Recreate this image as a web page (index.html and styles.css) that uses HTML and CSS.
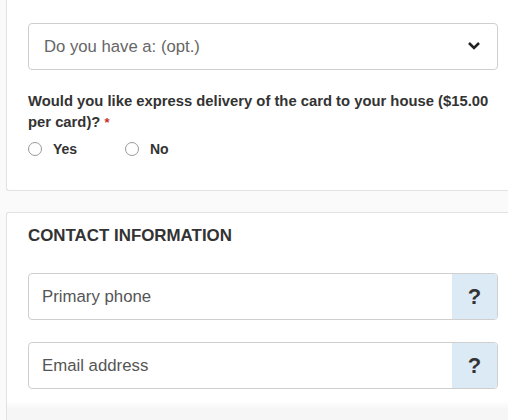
FILE: index.html
```html
<!DOCTYPE html>
<html>
<head>
<meta charset="utf-8">
<link rel="stylesheet" href="styles.css">
</head>
<body>
<div class="card card-top">
  <div class="select">
    <span class="select-text">Do you have a: (opt.)</span>
    <svg class="chevron" width="14" height="9" viewBox="0 0 14 9"><path d="M2 2 L7 7 L12 2" fill="none" stroke="#222" stroke-width="2.6"/></svg>
  </div>
  <p class="question">Would you like express delivery of the card to your house ($15.00 per card)? <span class="req">*</span></p>
  <div class="radios">
    <label class="radio"><span class="circle"></span>Yes</label>
    <label class="radio"><span class="circle"></span>No</label>
  </div>
</div>
<div class="card card-bottom">
  <h2 class="heading">CONTACT INFORMATION</h2>
  <div class="input">
    <span class="input-text">Primary phone</span>
    <span class="addon">?</span>
  </div>
  <div class="input">
    <span class="input-text">Email address</span>
    <span class="addon">?</span>
  </div>
</div>
</body>
</html>
```
FILE: styles.css
```css
html, body { margin: 0; padding: 0; }
body {
  width: 508px;
  height: 420px;
  overflow: hidden;
  background: #fafafa;
  font-family: "Liberation Sans", Arial, sans-serif;
  color: #333;
}
.card {
  background: #fff;
  margin-left: 6px;
  border: 1px solid #e2e2e2;
  border-right: none;
  box-sizing: border-box;
}
.card-top {
  border-top: none;
  height: 191px;
  padding: 23px 10px 0 21px;
  border-radius: 0 0 0 3px;
}
.select {
  display: flex;
  align-items: center;
  justify-content: space-between;
  height: 47px;
  box-sizing: border-box;
  border: 1px solid #cfcfcf;
  border-radius: 4px;
  padding: 0 16px 0 15px;
  background: #fff;
}
.select-text { font-size: 16.7px; color: #666; }
.chevron { display: block; margin-top: -2px; }
.question {
  margin: 21px 0 0 0;
  font-size: 14.8px;
  font-weight: bold;
  line-height: 21px;
  color: #333;
}
.req { color: #c9302c; font-size: 13px; line-height: 1; }
.radios {
  display: flex;
  margin-top: 8px;
}
.radio {
  display: flex;
  align-items: center;
  font-size: 14px;
  font-weight: bold;
  color: #333;
  width: 97px;
}
.circle {
  width: 12px;
  height: 12px;
  border: 1px solid #9a9a9a;
  border-radius: 50%;
  margin-right: 11px;
  background: #fff;
}
.card-bottom {
  margin-top: 21px;
  height: 208px;
  padding: 13px 10px 0 21px;
  border-bottom: none;
  border-radius: 3px 0 0 0;
  background: linear-gradient(#fff 0, #fff 188px, #f6f6f6 196px);
}
.heading {
  margin: 0;
  font-size: 16.9px;
  line-height: 20px;
  font-weight: bold;
  color: #333;
}
.input {
  display: flex;
  height: 47px;
  box-sizing: border-box;
  border: 1px solid #cfcfcf;
  border-radius: 4px;
  background: #fff;
  overflow: hidden;
}
.heading + .input { margin-top: 27px; }
.input + .input { margin-top: 22px; }
.input-text {
  flex: 1;
  display: flex;
  align-items: center;
  padding-left: 13px;
  font-size: 16.8px;
  color: #555;
}
.addon {
  width: 45px;
  background: #dbeaf5;
  display: flex;
  align-items: center;
  justify-content: center;
  font-size: 22px;
  font-weight: bold;
  color: #333;
}
```
